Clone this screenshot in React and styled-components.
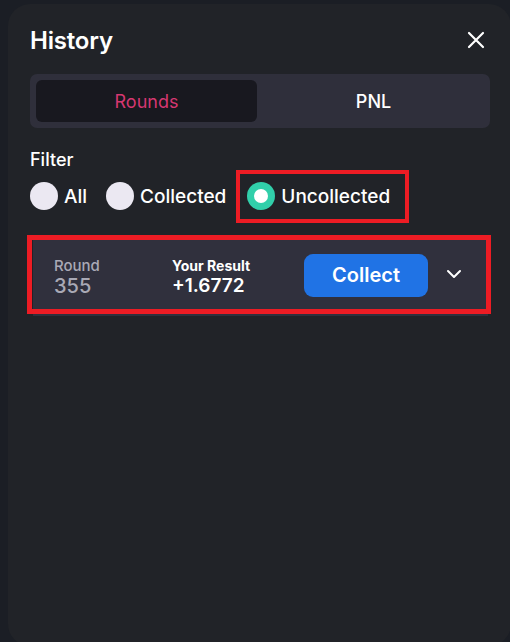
import React, { useState } from 'react'
import styled, { createGlobalStyle } from 'styled-components'

const GlobalStyle = createGlobalStyle`
  html, body {
    margin: 0;
    padding: 0;
    background: #1b1e25;
    font-family: Inter, "Noto Sans", "Liberation Sans", sans-serif;
    overflow: hidden;
  }
  * { box-sizing: border-box; }
`

const Page = styled.div`
  width: 510px;
  height: 642px;
  padding: 4px 0 0 8px;
  overflow: hidden;
`

const Panel = styled.div`
  width: 503px;
  height: 642px;
  background: #212328;
  border-radius: 22px;
  padding: 22px 21px 0 22px;
  color: #fff;
`

const Header = styled.div`
  display: flex;
  justify-content: space-between;
  align-items: center;
  height: 28px;
`

const Title = styled.h2`
  margin: 0;
  font-size: 24px;
  font-weight: 600;
  letter-spacing: -0.2px;
`

const CloseButton = styled.button`
  background: none;
  border: 0;
  padding: 0;
  width: 20px;
  height: 20px;
  display: flex;
  align-items: center;
  justify-content: center;
  cursor: pointer;
  margin-right: 4px;
`

const Tabs = styled.div`
  margin-top: 20px;
  height: 54px;
  padding: 6px;
  background: #2f2f3b;
  border-radius: 7px;
  display: grid;
  grid-template-columns: 1fr 1fr;
  gap: 6px;
`

const Tab = styled.button`
  border: 0;
  border-radius: 6px;
  font-family: inherit;
  font-size: 18px;
  font-weight: ${p => (p.$active ? 400 : 500)};
  background: ${p => (p.$active ? '#18181f' : 'transparent')};
  color: ${p => (p.$active ? '#d63771' : '#fff')};
  cursor: pointer;
`

const FilterLabel = styled.div`
  margin-top: 21px;
  font-size: 18px;
  font-weight: 500;
  line-height: 22px;
`

const Options = styled.div`
  display: flex;
  align-items: center;
  gap: 19px;
  margin-top: 10px;
  height: 30px;
`

const Option = styled.label`
  position: relative;
  display: flex;
  align-items: center;
  gap: 6px;
  font-size: 19px;
  font-weight: 500;
  cursor: pointer;
  ${p => p.$marked && `
    margin-left: 2px;
    &::after {
      content: '';
      position: absolute;
      left: -11px;
      right: -19px;
      top: -12px;
      bottom: -13px;
      border: 4px solid #ed1c24;
      pointer-events: none;
    }
  `}
`

const Dot = styled.span`
  width: 28px;
  height: 28px;
  border-radius: 50%;
  background: ${p => (p.$checked ? '#31cfaa' : '#ebe8f2')};
  display: flex;
  align-items: center;
  justify-content: center;
  &::before {
    content: '';
    display: ${p => (p.$checked ? 'block' : 'none')};
    width: 14px;
    height: 14px;
    border-radius: 50%;
    background: #fff;
  }
`

const Card = styled.div`
  position: relative;
  margin: 26px 2px 0 3px;
  height: 79px;
  background: #30303d;
  display: flex;
  align-items: center;
  padding-left: 21px;
  &::after {
    content: '';
    position: absolute;
    left: -6px;
    right: -3px;
    top: -2px;
    bottom: 2px;
    border: 5px solid #ed1c24;
    pointer-events: none;
  }
`

const Stat = styled.div`
  width: ${p => p.$w}px;
  display: flex;
  flex-direction: column;
  color: ${p => (p.$muted ? '#a9a9b5' : '#fff')};
`

const StatLabel = styled.span`
  font-size: ${p => (p.$strong ? 14 : 15)}px;
  font-weight: ${p => (p.$strong ? 700 : 500)};
  line-height: 18px;
`

const StatValue = styled.span`
  font-size: ${p => (p.$strong ? 19 : 20)}px;
  font-weight: ${p => (p.$strong ? 600 : 500)};
  line-height: 22px;
`

const CollectButton = styled.button`
  width: 124px;
  height: 43px;
  border: 0;
  border-radius: 9px;
  background: #2073e5;
  color: #fff;
  font-family: inherit;
  font-size: 20px;
  font-weight: 600;
  cursor: pointer;
  margin-top: -3px;
`

const Toggle = styled.button`
  background: none;
  border: 0;
  padding: 0;
  margin-left: 17px;
  width: 18px;
  height: 18px;
  display: flex;
  align-items: center;
  justify-content: center;
  margin-top: -5px;
`

const filters = ['All', 'Collected', 'Uncollected']

export default function App() {
  const [tab, setTab] = useState('rounds')
  const [filter, setFilter] = useState('Uncollected')

  return (
    <>
      <GlobalStyle />
      <Page>
        <Panel>
          <Header>
            <Title>History</Title>
            <CloseButton aria-label="close">
              <svg width="18" height="18" viewBox="0 0 18 18">
                <path d="M2 2 L16 16 M16 2 L2 16" stroke="#fff" strokeWidth="2.2" strokeLinecap="round" />
              </svg>
            </CloseButton>
          </Header>

          <Tabs>
            <Tab $active={tab === 'rounds'} onClick={() => setTab('rounds')}>Rounds</Tab>
            <Tab $active={tab === 'pnl'} onClick={() => setTab('pnl')}>PNL</Tab>
          </Tabs>

          <FilterLabel>Filter</FilterLabel>
          <Options>
            {filters.map(f => (
              <Option key={f} $marked={f === 'Uncollected'} onClick={() => setFilter(f)}>
                <Dot $checked={filter === f} />
                {f}
              </Option>
            ))}
          </Options>

          <Card>
            <Stat $w={118} $muted>
              <StatLabel>Round</StatLabel>
              <StatValue>355</StatValue>
            </Stat>
            <Stat $w={132}>
              <StatLabel $strong>Your Result</StatLabel>
              <StatValue $strong>+1.6772</StatValue>
            </Stat>
            <CollectButton>Collect</CollectButton>
            <Toggle aria-label="expand">
              <svg width="16" height="10" viewBox="0 0 16 10">
                <path d="M2 2 L8 8 L14 2" stroke="#fff" strokeWidth="2" fill="none" strokeLinecap="round" strokeLinejoin="round" />
              </svg>
            </Toggle>
          </Card>
        </Panel>
      </Page>
    </>
  )
}
